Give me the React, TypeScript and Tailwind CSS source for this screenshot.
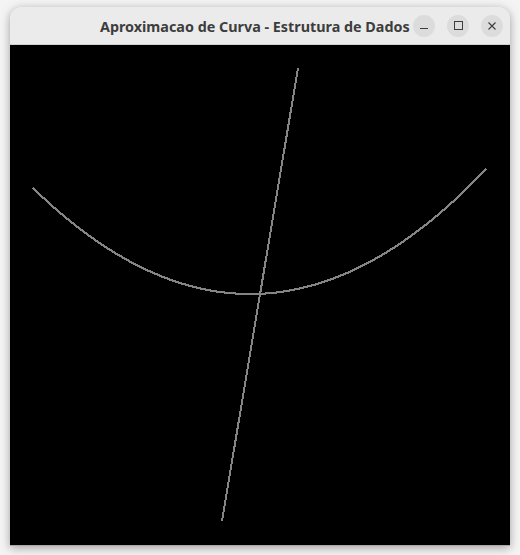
import React from "react";

// canvas origin on screen is (10, 45); all points below are canvas coords
const curvePoints = (() => {
  const pts: string[] = [];
  for (let x = 33; x <= 486; x += 1) {
    const y = 294 - 0.002247 * (x - 250.2) * (x - 250.2);
    pts.push(`${x - 10},${Math.round(y) - 45}`);
  }
  return pts.join(" ");
})();

const TitleButton: React.FC<{ children: React.ReactNode }> = ({ children }) => (
  <div className="w-[22px] h-[22px] rounded-full bg-[#dcdcdc] flex items-center justify-center">{children}</div>
);

const App: React.FC = () => {
  return (
    <div className="w-[520px] h-[555px] bg-[#f4f4f4] pt-[7px] px-[10px]">
      <div className="w-[500px] rounded-t-[12px] shadow-[0_2px_10px_rgba(0,0,0,0.35)] border-b border-[#a9a9a9] overflow-hidden">
        {/* Title bar */}
        <div className="h-[38px] bg-[#ebebeb] border-b border-[#d0d0d0] flex items-center relative">
          <div
            className="absolute left-[90px] top-[9px] text-[14.35px] font-bold text-[#3d3d3d] whitespace-nowrap"
            style={{ fontFamily: '"Noto Sans", "DejaVu Sans", sans-serif' }}
          >
            Aproximacao de Curva - Estrutura de Dados
          </div>
          <div className="ml-auto mr-[7px] flex items-center gap-[12px]">
            <TitleButton>
              <div className="w-[8px] h-[1px] bg-[#3d3d3d] mt-[6px]" />
            </TitleButton>
            <TitleButton>
              <div className="w-[9px] h-[9px] border border-[#3d3d3d]" />
            </TitleButton>
            <TitleButton>
              <svg width="10" height="10" viewBox="0 0 10 10">
                <path d="M1.5 1.5 L8.5 8.5 M8.5 1.5 L1.5 8.5" stroke="#3d3d3d" strokeWidth="1.1" />
              </svg>
            </TitleButton>
          </div>
        </div>
        {/* Drawing canvas */}
        <div className="w-[500px] h-[500px] bg-black">
          <svg width="500" height="500" viewBox="0 0 500 500" shapeRendering="crispEdges">
            <polyline points={curvePoints} fill="none" stroke="#858585" strokeWidth="2" />
            <line x1={288} y1={23} x2={212} y2={476} stroke="#858585" strokeWidth="2" />
          </svg>
        </div>
      </div>
    </div>
  );
};

export default App;
